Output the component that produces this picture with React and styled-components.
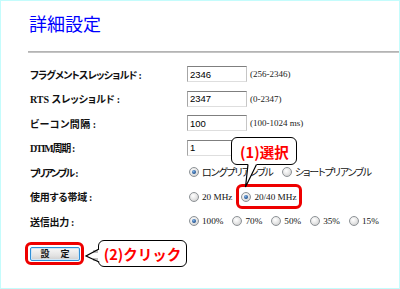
import React from "react";
import styled, { createGlobalStyle, css } from "styled-components";

const GlobalStyle = createGlobalStyle`
  html, body { margin: 0; padding: 0; background: #fff; }
  body { font-family: "Noto Sans CJK JP", "Liberation Sans", sans-serif; }
`;

const JP = `"Noto Sans CJK JP", "Liberation Sans", sans-serif`;
const SERIF = `"Liberation Serif", "Noto Sans CJK JP", serif`;

const Frame = styled.div`
  width: 400px;
  height: 289px;
  box-sizing: border-box;
  border: 1px solid #c4fcfc;
  padding: 0 0 0 27px;
  display: flex;
  flex-direction: column;
  overflow: hidden;
  background: #fff;
`;

const Title = styled.h1`
  margin: 12px 0 0 1px;
  font-family: ${JP};
  font-size: 18px;
  line-height: 20px;
  font-weight: 400;
  color: #0000ff;
`;

const Divider = styled.div`
  margin-top: 18px;
  height: 2px;
  background: linear-gradient(#b4b4b4 50%, #c4c4c4 50%);
`;

const Form = styled.div`
  margin-top: 9px;
  padding-left: 2px;
  display: flex;
  flex-direction: column;
`;

const Row = styled.div`
  height: 24.5px;
  display: flex;
  align-items: center;
`;

const Label = styled.div`
  width: 157px;
  flex: none;
  font-family: "Liberation Serif", "Noto Sans CJK JP", serif;
  font-size: 10px;
  font-weight: 700;
  font-feature-settings: "palt";
  letter-spacing: ${(p) => p.$tracking ?? -0.8}px;
  color: #111;
  white-space: nowrap;
`;

const Colon = styled.span`
  margin-left: 2px;
`;

const Value = styled.div`
  display: flex;
  align-items: center;
  gap: 9px;
`;

const TextInput = styled.input`
  width: 60px;
  height: 16px;
  box-sizing: border-box;
  border: 1px solid;
  border-color: #7f7f7f #c6c6c6 #dedede #a6a6a6;
  padding: 0 2px;
  margin: 0;
  font-family: "Liberation Sans", sans-serif;
  font-size: 9.5px;
  color: #000;
  background: #fff;
  outline: none;
`;

const Hint = styled.span`
  margin-left: -6px;
  font-family: ${SERIF};
  font-size: 9px;
  color: #222;
`;

const Option = styled.span`
  position: relative;
  display: inline-flex;
  align-items: center;
  gap: 3px;
  height: 12px;
  ${(p) => p.$first && css`margin-left: 2px;`}
  ${(p) =>
    p.$highlight &&
    css`
      &::after {
        content: "";
        position: absolute;
        left: -5px;
        top: -6.5px;
        width: 66px;
        height: 25px;
        box-sizing: border-box;
        border: 3px solid #ee0000;
        border-radius: 6px;
        pointer-events: none;
      }
    `}
`;

const Radio = styled.span`
  width: 10px;
  height: 10px;
  box-sizing: border-box;
  border-radius: 50%;
  border: 1px solid #8d9296;
  background: radial-gradient(circle at 40% 35%, #ffffff 0%, #e6e6e6 50%, #c2c2c2 100%);
  position: relative;
  flex: none;
  ${(p) =>
    p.$checked &&
    css`
      &::after {
        content: "";
        position: absolute;
        inset: 2px;
        border-radius: 50%;
        background: radial-gradient(circle at 40% 35%, #7fb2e6 0%, #2a5c9a 60%, #163a6a 100%);
      }
    `}
`;

const OptionText = styled.span`
  font-family: ${(p) => (p.$serif ? SERIF : JP)};
  font-size: ${(p) => (p.$serif ? "9.2px" : "10px")};
  font-feature-settings: "palt";
  letter-spacing: ${(p) => (p.$serif ? "0" : "-1.1px")};
  color: #111;
  white-space: nowrap;
  line-height: 12px;
`;

const Bubble = styled.div`
  position: absolute;
  box-sizing: border-box;
  border: 1.5px solid #000;
  border-radius: 6px;
  background: #fff;
  display: flex;
  align-items: center;
  justify-content: center;
  font-family: ${JP};
  font-size: 14.5px;
  font-weight: 700;
  color: #ff0000;
  white-space: nowrap;
  z-index: 2;
`;

const TopBubble = styled(Bubble)`
  left: -10px;
  top: -53.5px;
  width: 66px;
  height: 28px;
`;

const TailSvg = styled.svg`
  position: absolute;
  overflow: visible;
  z-index: 3;
`;

const TopTail = styled(TailSvg)`
  left: 1px;
  top: -27px;
  width: 16px;
  height: 24px;
`;

const ButtonRow = styled.div`
  margin-top: 6px;
  margin-left: -3px;
  display: flex;
  align-items: center;
`;

const Highlight = styled.div`
  border: 3px solid #ee0000;
  border-radius: 6px;
  padding: 2px 1px 1px 2px;
  display: flex;
`;

const SubmitButton = styled.button`
  width: 50px;
  height: 14px;
  box-sizing: border-box;
  margin: 0;
  padding: 0 0 0 1px;
  border: 1px solid #2f8fd6;
  border-radius: 2px;
  box-shadow: inset 0 0 0 1px #cfe6f7;
  background: linear-gradient(#f7f7f7, #e4e4e4 60%, #cfcfcf);
  font-family: ${JP};
  font-size: 9px;
  font-weight: 700;
  line-height: 12px;
  color: #111;
  letter-spacing: 1px;
`;

const SideBubbleWrap = styled.div`
  position: relative;
  margin-left: 14px;
`;

const SideBubble = styled(Bubble)`
  position: static;
  width: 89px;
  height: 27px;
`;

const SideTail = styled(TailSvg)`
  left: -13px;
  top: 8px;
  width: 14px;
  height: 15px;
`;

const fields = [
  { label: "フラグメントスレッショルド", value: "2346", hint: "(256-2346)", tracking: -0.8 },
  { label: "RTS スレッショルド", value: "2347", hint: "(0-2347)", tracking: 0 },
  { label: "ビーコン間隔", value: "100", hint: "(100-1024 ms)", tracking: 0.5 },
  { label: "DTIM周期", value: "1", tracking: -1.2 },
];

export default function App() {
  return (
    <>
      <GlobalStyle />
      <Frame>
        <Title>詳細設定</Title>
        <Divider />
        <Form>
          {fields.map((f) => (
            <Row key={f.label}>
              <Label $tracking={f.tracking}>
                {f.label}
                <Colon>:</Colon>
              </Label>
              <Value>
                <TextInput defaultValue={f.value} />
                {f.hint && <Hint>{f.hint}</Hint>}
              </Value>
            </Row>
          ))}
          <Row>
            <Label $tracking={-1.9}>
              プリアンブル<Colon>:</Colon>
            </Label>
            <Value>
              <Option $first>
                <Radio $checked />
                <OptionText>ロングプリアンブル</OptionText>
              </Option>
              <Option>
                <Radio />
                <OptionText>ショートプリアンブル</OptionText>
              </Option>
            </Value>
          </Row>
          <Row>
            <Label $tracking={-0.2}>
              使用する帯域<Colon>:</Colon>
            </Label>
            <Value>
              <Option $first>
                <Radio />
                <OptionText $serif>20 MHz</OptionText>
              </Option>
              <Option $highlight>
                <Radio $checked />
                <OptionText $serif>20/40 MHz</OptionText>
                <TopBubble>(1)選択</TopBubble>
                <TopTail viewBox="0 0 16 24">
                  <polygon points="6,0 15,0 3.5,23" fill="#fff" />
                  <polyline points="6,0.5 3.5,23 14.5,0.5" fill="none" stroke="#000" strokeWidth="1.2" />
                </TopTail>
              </Option>
            </Value>
          </Row>
          <Row>
            <Label $tracking={-0.25}>
              送信出力<Colon>:</Colon>
            </Label>
            <Value>
              {["100%", "70%", "50%", "35%", "15%"].map((v, i) => (
                <Option key={v} $first={i === 0}>
                  <Radio $checked={i === 0} />
                  <OptionText $serif>{v}</OptionText>
                </Option>
              ))}
            </Value>
          </Row>
        </Form>
        <ButtonRow>
          <Highlight>
            <SubmitButton type="button">設　定</SubmitButton>
          </Highlight>
          <SideBubbleWrap>
            <SideBubble>(2)クリック</SideBubble>
            <SideTail viewBox="0 0 14 15">
              <polygon points="14,1 1,8 14,14" fill="#fff" />
              <rect x="8" y="2" width="5" height="3" fill="#bdbdbd" />
              <rect x="8" y="10" width="5" height="3" fill="#bdbdbd" />
              <polyline points="14,1 1,8 14,14" fill="none" stroke="#000" strokeWidth="1.2" />
            </SideTail>
          </SideBubbleWrap>
        </ButtonRow>
      </Frame>
    </>
  );
}
